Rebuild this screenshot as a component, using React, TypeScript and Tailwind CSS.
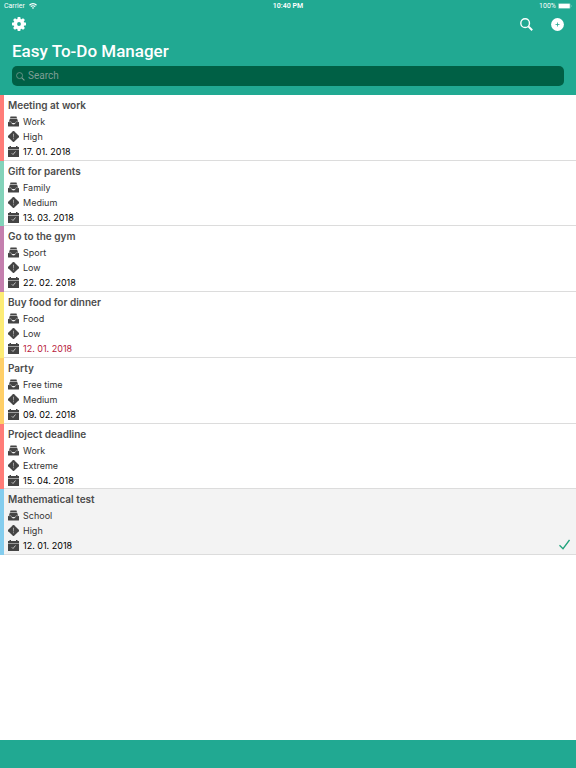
import { useState } from 'react';

interface Task {
  id: number;
  title: string;
  category: string;
  priority: string;
  due: string;
  stripe: string;
  overdue?: boolean;
  done?: boolean;
}

const TASKS: Task[] = [
  { id: 1, title: 'Meeting at work', category: 'Work', priority: 'High', due: '17. 01. 2018', stripe: 'bg-[#ff7c78]' },
  { id: 2, title: 'Gift for parents', category: 'Family', priority: 'Medium', due: '13. 03. 2018', stripe: 'bg-[#83d3ba]' },
  { id: 3, title: 'Go to the gym', category: 'Sport', priority: 'Low', due: '22. 02. 2018', stripe: 'bg-[#c47fae]' },
  { id: 4, title: 'Buy food for dinner', category: 'Food', priority: 'Low', due: '12. 01. 2018', stripe: 'bg-[#fdec76]', overdue: true },
  { id: 5, title: 'Party', category: 'Free time', priority: 'Medium', due: '09. 02. 2018', stripe: 'bg-[#ffcf68]' },
  { id: 6, title: 'Project deadline', category: 'Work', priority: 'Extreme', due: '15. 04. 2018', stripe: 'bg-[#ff7c78]' },
  { id: 7, title: 'Mathematical test', category: 'School', priority: 'High', due: '12. 01. 2018', stripe: 'bg-[#84cdee]', done: true },
];

const TEETH = [0, 45, 90, 135, 180, 225, 270, 315];

function GearIcon() {
  return (
    <svg viewBox="0 0 28 28" className="size-[14px]" fill="currentColor" aria-hidden="true">
      {TEETH.map((angle) => (
        <path key={angle} d="M10.4 6 11.2 1Q11.4 0 12.4 0h3.2q1 0 1.2 1l.8 5z" transform={`rotate(${angle} 14 14)`} />
      ))}
      <path
        fillRule="evenodd"
        d="M14 3.6a10.4 10.4 0 1 0 0 20.8 10.4 10.4 0 0 0 0-20.8zm0 6.6a3.8 3.8 0 1 1 0 7.6 3.8 3.8 0 0 1 0-7.6z"
      />
    </svg>
  );
}

function SearchIcon({ className, strokeWidth }: { className: string; strokeWidth: number }) {
  return (
    <svg viewBox="0 0 24 24" className={className} fill="none" stroke="currentColor" aria-hidden="true">
      <circle cx="9.5" cy="9.5" r="8" strokeWidth={strokeWidth} />
      <path d="m15.5 15.5 7 7" strokeWidth={strokeWidth * 1.4} />
    </svg>
  );
}

function AddIcon() {
  return (
    <svg viewBox="0 0 26 26" className="size-[13px]" aria-hidden="true">
      <circle cx="13" cy="13" r="12.8" fill="#fff" />
      <path d="M13 9v8M9 13h8" stroke="#21a992" strokeWidth="1.6" />
    </svg>
  );
}

function WifiIcon() {
  return (
    <svg viewBox="0 0 16 12" className="h-[6px] w-[8px]" fill="none" stroke="currentColor" aria-hidden="true">
      <path d="M1 4.4a10 10 0 0 1 14 0" strokeWidth="2.6" />
      <path d="M3.6 7.3a6.2 6.2 0 0 1 8.8 0" strokeWidth="2.2" />
      <path d="M8 12 5.6 9.5a3.4 3.4 0 0 1 4.8 0z" fill="currentColor" stroke="none" />
    </svg>
  );
}

function BatteryIcon() {
  return (
    <svg viewBox="0 0 28 12" className="h-[6px] w-[14px]" fill="currentColor" aria-hidden="true">
      <rect x="0.4" y="0.4" width="24.2" height="11.2" rx="2.6" fill="none" stroke="currentColor" strokeWidth="0.8" opacity="0.6" />
      <rect x="1.4" y="1.4" width="22.2" height="9.2" rx="1.4" />
      <path d="M26 4q1.6 2 0 4z" />
    </svg>
  );
}

function CategoryIcon() {
  return (
    <svg viewBox="0 0 22 22" className="size-[11px] shrink-0" aria-hidden="true">
      <path d="M5 1h12l1 3.4H4z" fill="currentColor" />
      <path d="M3.6 5.4h14.8L20 11v3H2v-3z" fill="currentColor" />
      <path d="M0 12h6l2 3.5q3 2 6 0l2-3.5h6v8q0 1-1 1H1q-1 0-1-1z" fill="currentColor" />
      <path d="M.5 11.500H6l2.200 3.500q2.800 1.600 5.600 0l2.200-3.500h5.500" fill="none" stroke="#ccc" strokeWidth="1" />
    </svg>
  );
}

function PriorityIcon() {
  return (
    <svg viewBox="0 0 22 22" className="size-[11px] shrink-0" aria-hidden="true">
      <path d="M9.7.4q1.3-1 2.6 0l9.3 9.3q1 1.3 0 2.6l-9.3 9.3q-1.3 1-2.6 0L.4 12.3q-1-1.300 0-2.600z" fill="currentColor" />
      <path d="M10.100 5.500h1.800l-.3 7.500h-1.200zM10.200 14.500h1.600v2h-1.600z" fill="#bbb" />
    </svg>
  );
}

function DateIcon() {
  return (
    <svg viewBox="0 0 22 22" className="size-[11px] shrink-0" aria-hidden="true">
      <path d="M0 2h3V0h3v2h10V0h3v2h3v4.600H0zM0 7.400h22V22H0z" fill="currentColor" />
      <path d="m7.500 14.500 2.500 2.500 5-6" fill="none" stroke="#e0e0e0" strokeWidth="1.6" />
    </svg>
  );
}

function TaskRow({ task }: { task: Task }) {
  return (
    <li className={`flex border-b border-[#dcdcdc] ${task.done ? 'bg-[#f3f3f3]' : 'bg-white'}`}>
      <div className={`-mb-px w-1 shrink-0 ${task.stripe}`} />
      <div className="min-w-0 flex-1 pt-px pl-1">
        <h2 className="truncate text-[10px] leading-[18px] font-semibold text-[#4c4c4c]">{task.title}</h2>
        <ul className="text-[9px] leading-[15px] text-[#333]">
          <li className="flex items-center gap-1">
            <span className="text-[#444]"><CategoryIcon /></span>
            {task.category}
          </li>
          <li className="flex items-center gap-1">
            <span className="text-[#444]"><PriorityIcon /></span>
            {task.priority}
          </li>
          <li className="flex items-center gap-1">
            <span className="text-[#444]"><DateIcon /></span>
            <time className={task.overdue ? 'text-[#b8203c]' : 'text-black'}>{task.due}</time>
          </li>
        </ul>
      </div>
      {task.done && (
        <svg viewBox="0 0 22 22" className="mr-1.5 mb-1 size-[11px] shrink-0 self-end" fill="none" aria-label="Done">
          <path d="m1 12.500 7 7L21 2" stroke="#21a37c" strokeWidth="2.600" />
        </svg>
      )}
    </li>
  );
}

export default function App() {
  const [query, setQuery] = useState('');
  const visible = TASKS.filter((task) => task.title.toLowerCase().includes(query.toLowerCase()));

  return (
    <div className="flex min-h-screen flex-col bg-white font-['Inter','Liberation_Sans',sans-serif]">
      <header className="bg-[#21a992] pb-[9px] font-['Roboto','Liberation_Sans',sans-serif] text-white">
        {/* Status bar */}
        <div className="grid h-3 grid-cols-3 items-center px-1 text-[7px] leading-3">
          <span className="flex items-center gap-1">
            Carrier
            <WifiIcon />
          </span>
          <span className="text-center font-semibold">10:40 PM</span>
          <span className="flex items-center justify-end gap-0.5">
            100%
            <BatteryIcon />
          </span>
        </div>
        <div className="flex h-6 items-center justify-between px-3">
          <button type="button" aria-label="Settings">
            <GearIcon />
          </button>
          <div className="flex items-center gap-[18px]">
            <button type="button" aria-label="Search tasks">
              <SearchIcon className="size-[13px]" strokeWidth={2.6} />
            </button>
            <button type="button" aria-label="Add task">
              <AddIcon />
            </button>
          </div>
        </div>
        <h1 className="px-3 pt-1 text-[17px] leading-[22px] font-medium">Easy To-Do Manager</h1>
        <label className="mx-3 mt-1 flex h-5 items-center gap-[3px] rounded-[5px] bg-[#006045] px-1 text-[#7f9f95]">
          <SearchIcon className="size-[9px]" strokeWidth={2} />
          <input
            type="text"
            aria-label="Search"
            placeholder="Search"
            value={query}
            onChange={(e) => setQuery(e.target.value)}
            className="min-w-0 flex-1 bg-transparent text-[10px] leading-4 text-white outline-none placeholder:text-[#7f9f95]"
          />
        </label>
      </header>
      <main className="flex-1">
        <ul className="grid min-h-[460px] auto-rows-fr">
          {visible.map((task) => (
            <TaskRow key={task.id} task={task} />
          ))}
        </ul>
      </main>
      <footer className="h-7 bg-[#21a992]" />
    </div>
  );
}
